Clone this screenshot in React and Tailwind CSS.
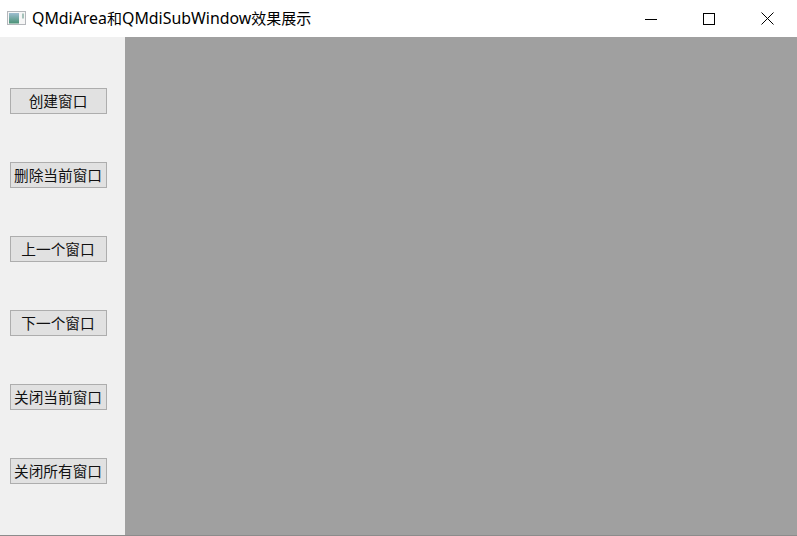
import React from "react";

const buttons = [
  "创建窗口",
  "删除当前窗口",
  "上一个窗口",
  "下一个窗口",
  "关闭当前窗口",
  "关闭所有窗口",
];

const App = () => {
  return (
    <div className="w-[797px] h-[536px] flex flex-col overflow-hidden bg-white font-['Noto_Sans','Noto_Sans_CJK_SC',sans-serif]">
      {/* Title bar */}
      <div className="h-[37px] shrink-0 bg-white flex items-center text-black">
        <svg className="ml-[7px] w-[19px] h-[14px] -mt-[1px]" viewBox="0 0 19 14">
          <defs>
            <linearGradient id="pane" x1="0" y1="0" x2="0" y2="1">
              <stop offset="0" stopColor="#9dbdd0" />
              <stop offset="1" stopColor="#4a9276" />
            </linearGradient>
          </defs>
          <rect x="0.5" y="0.5" width="18" height="13" fill="#f6f6f6" stroke="#b4b7bb" />
          <rect x="2" y="2" width="10" height="10.5" fill="url(#pane)" />
          <rect x="15" y="2.5" width="2" height="5" fill="#a5c2ba" />
        </svg>
        <span className="ml-[6px] text-[15px] leading-none whitespace-nowrap">
          <span className="text-[15.9px]">QMdiArea</span>和<span className="text-[15.9px]">QMdiSubWindow</span>效果展示
        </span>
        {/* Window controls */}
        <div className="ml-auto flex items-center">
          <div className="w-[58px] flex justify-center">
            <svg width="12" height="12" viewBox="0 0 12 12">
              <path d="M0 6.5H12" stroke="#000" fill="none" />
            </svg>
          </div>
          <div className="w-[58px] flex justify-center">
            <svg width="12" height="12" viewBox="0 0 12 12">
              <rect x="0.5" y="0.5" width="11" height="11" stroke="#000" fill="none" />
            </svg>
          </div>
          <div className="w-[59px] flex justify-center">
            <svg width="13" height="13" viewBox="0 0 13 13">
              <path d="M0.5 0.5L12.5 12.5M12.5 0.5L0.5 12.5" stroke="#000" fill="none" />
            </svg>
          </div>
        </div>
      </div>

      <div className="flex-1 flex min-h-0 border-b border-[#8c8c8c]">
        {/* Side buttons */}
        <div className="w-[125px] shrink-0 bg-[#f0f0f0] flex flex-col gap-[48px] pt-[51px] pl-[10px]">
          {buttons.map((label) => (
            <button
              key={label}
              className="w-[97px] h-[26px] pr-[1px] bg-[#e1e1e1] border border-[#adadad] text-[#111] text-[14.67px] leading-none whitespace-nowrap flex items-center justify-center"
            >
              {label}
            </button>
          ))}
        </div>
        {/* MDI area */}
        <div className="flex-1 bg-[#a0a0a0]"></div>
      </div>
    </div>
  );
};

export default App;
